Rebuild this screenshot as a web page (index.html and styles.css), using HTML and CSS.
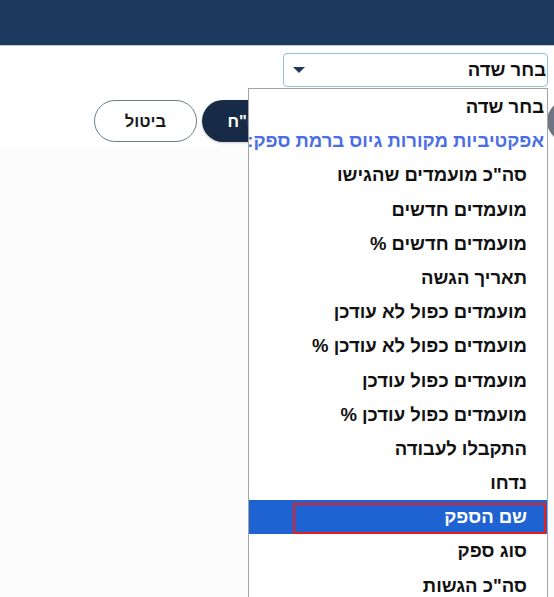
FILE: index.html
```html
<!DOCTYPE html>
<html lang="he" dir="rtl">
<head>
<meta charset="utf-8">
<title>בחר שדה</title>
<link rel="stylesheet" href="styles.css">
</head>
<body>
<header class="topbar"></header>
<main class="content">
  <div class="field-row">
    <div class="select-box">
      <span class="select-value">בחר שדה</span>
      <span class="select-arrow"></span>
    </div>
  </div>
  <div class="button-row">
    <button class="btn btn-grey" aria-label="אפס"></button>
    <button class="btn btn-dark">הפק דו"ח</button>
    <button class="btn btn-outline">ביטול</button>
  </div>
</main>
<div class="dropdown" role="listbox">
  <div class="opt">בחר שדה</div>
  <div class="group-label">אפקטיביות מקורות גיוס ברמת ספק:</div>
  <div class="opt sub">סה"כ מועמדים שהגישו</div>
  <div class="opt sub">מועמדים חדשים</div>
  <div class="opt sub">מועמדים חדשים %</div>
  <div class="opt sub">תאריך הגשה</div>
  <div class="opt sub">מועמדים כפול לא עודכן</div>
  <div class="opt sub">מועמדים כפול לא עודכן %</div>
  <div class="opt sub">מועמדים כפול עודכן</div>
  <div class="opt sub">מועמדים כפול עודכן %</div>
  <div class="opt sub">התקבלו לעבודה</div>
  <div class="opt sub">נדחו</div>
  <div class="opt sub selected"><span class="mark"></span>שם הספק</div>
  <div class="opt sub">סוג ספק</div>
  <div class="opt sub">סה"כ הגשות</div>
</div>
</body>
</html>
```
FILE: styles.css
```css
html, body {
  margin: 0;
  padding: 0;
}
body {
  width: 554px;
  height: 597px;
  overflow: hidden;
  background: #fcfcfd;
  font-family: "Liberation Sans", Arial, "DejaVu Sans", sans-serif;
  color: #111;
  position: relative;
}
.topbar {
  height: 45px;
  background: #1d3a5e;
  border-bottom: 1px solid #b9c6d3;
}
.content {
  background: #fff;
  padding-bottom: 4px;
}
.field-row {
  display: flex;
  padding: 7px 6px 0 0;
}
.select-box {
  box-sizing: border-box;
  width: 265px;
  height: 34px;
  border: 1px solid #8fc3d4;
  border-radius: 4px;
  background: #fff;
  display: flex;
  align-items: center;
  justify-content: space-between;
  padding: 0 1px 0 9px;
}
.select-value {
  font-weight: bold;
  font-size: 18.5px;
}
.select-arrow {
  width: 0;
  height: 0;
  border-left: 6px solid transparent;
  border-right: 6px solid transparent;
  border-top: 6px solid #1d3a5e;
}
.button-row {
  display: flex;
  padding: 13px 0 0 94px;
  gap: 5px;
}
.btn {
  height: 42px;
  border-radius: 21px;
  font-family: inherit;
  font-weight: bold;
  font-size: 16.5px;
  padding: 0;
}
.btn-grey {
  width: 60px;
  margin-right: -53px;
  background: #6e7582;
  border: none;
}
.btn-dark {
  width: 122px;
  margin-right: auto;
  background: #172b46;
  border: none;
  color: #fff;
  box-shadow: 0 1px 3px rgba(0, 0, 0, 0.2);
}
.btn-outline {
  width: 103px;
  background: #fff;
  border: 1px solid #6f7d8c;
  color: #1b1b1b;
}
.dropdown {
  position: absolute;
  left: 248px;
  top: 88px;
  width: 298px;
  height: 520px;
  background: #fff;
  border: 1px solid #a3a3a3;
  overflow: hidden;
  padding-top: 1px;
}
.opt, .group-label {
  height: 34.2px;
  line-height: 34.2px;
  font-size: 18.5px;
  font-weight: bold;
  padding-right: 3px;
  white-space: nowrap;
  position: relative;
}
.group-label {
  color: #4a6ee6;
}
.opt.sub {
  padding-right: 20px;
}
.opt.selected {
  background: #1f63d3;
  color: #fff;
}
.mark {
  position: absolute;
  right: 1px;
  top: 3px;
  bottom: 0;
  width: 253px;
  border: 2px solid #e5201f;
  box-sizing: border-box;
}
```
